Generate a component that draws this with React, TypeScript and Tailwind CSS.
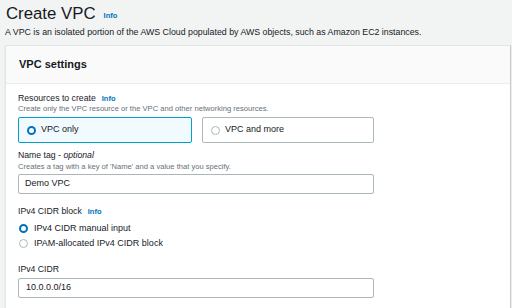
import React from "react";

function Radio({ checked }: { checked: boolean }) {
  return checked ? (
    <span className="inline-block w-[9px] h-[9px] rounded-full border-[2.5px] border-[#0073bb] bg-white shrink-0" />
  ) : (
    <span className="inline-block w-[9px] h-[9px] rounded-full border border-[#aab7b8] bg-white shrink-0" />
  );
}

function Info() {
  return <span className="text-[#0073bb] font-bold text-[7.5px] ml-[6px]">Info</span>;
}

export default function App() {
  return (
    <div
      className="w-[512px] h-[308px] overflow-hidden bg-[#f2f3f3] text-[#16191f]"
      style={{ fontFamily: '"Liberation Sans", Arial, sans-serif' }}
    >
      <div className="pl-[6px] pt-[6px] h-[25px] flex items-end">
        <span className="text-[16.8px] leading-[22px]">Create VPC</span>
        <span className="text-[#0073bb] font-bold text-[7.5px] ml-[8px] mb-[4px]">Info</span>
      </div>
      <div className="pl-[5px] text-[8.8px] leading-[11px] mt-[2px]">
        A VPC is an isolated portion of the AWS Cloud populated by AWS objects, such as Amazon EC2 instances.
      </div>
      <div className="ml-[5px] mt-[7px] w-[506px] bg-white border border-[#e3e6e6] border-r-[#c5cccc] shadow-[0_1px_1px_rgba(0,28,36,0.15)]">
        <div className="h-[38px] bg-[#fafafa] border-b border-[#eaeded] flex items-center pl-[13px]">
          <span className="font-bold text-[11px]">VPC settings</span>
        </div>
        <div className="pl-[12px] pt-[9px] pb-[20px] flex flex-col">
          <div className="text-[8.7px] leading-[11px] flex items-center">
            Resources to create <Info />
          </div>
          <div className="text-[7.6px] leading-[10px] text-[#687078]">
            Create only the VPC resource or the VPC and other networking resources.
          </div>
          <div className="flex gap-[10px] mt-[3px]">
            <div className="w-[174px] h-[26px] border border-[#00a1c9] bg-[#f1faff] rounded-[2px] flex items-center pl-[8px] gap-[5px] text-[9px]">
              <Radio checked />
              <span>VPC only</span>
            </div>
            <div className="w-[172px] h-[26px] border border-[#aab7b8] bg-white rounded-[2px] flex items-center pl-[8px] gap-[5px] text-[9px]">
              <Radio checked={false} />
              <span>VPC and more</span>
            </div>
          </div>
          <div className="text-[8.7px] leading-[11px] mt-[7px]">
            Name tag - <i>optional</i>
          </div>
          <div className="text-[7.6px] leading-[10px] text-[#687078] mt-[1px]">
            Creates a tag with a key of 'Name' and a value that you specify.
          </div>
          <div className="w-[356px] h-[20px] mt-[2px] border border-[#aab7b8] rounded-[2px] flex items-center pl-[6px] text-[9px]">
            Demo VPC
          </div>
          <div className="text-[8.7px] leading-[11px] mt-[12px] flex items-center">
            IPv4 CIDR block <Info />
          </div>
          <div className="flex flex-col mt-[4px]">
            <div className="h-[15px] flex items-center gap-[6px] pl-[1px] text-[9px]">
              <Radio checked />
              <span>IPv4 CIDR manual input</span>
            </div>
            <div className="h-[15px] flex items-center gap-[6px] pl-[1px] text-[9px]">
              <Radio checked={false} />
              <span>IPAM-allocated IPv4 CIDR block</span>
            </div>
          </div>
          <div className="text-[8.7px] leading-[11px] mt-[13px]">IPv4 CIDR</div>
          <div className="w-[356px] h-[20px] mt-[3px] border border-[#aab7b8] rounded-[2px] flex items-center pl-[7px] text-[9px]">
            10.0.0.0/16
          </div>
        </div>
      </div>
    </div>
  );
}
